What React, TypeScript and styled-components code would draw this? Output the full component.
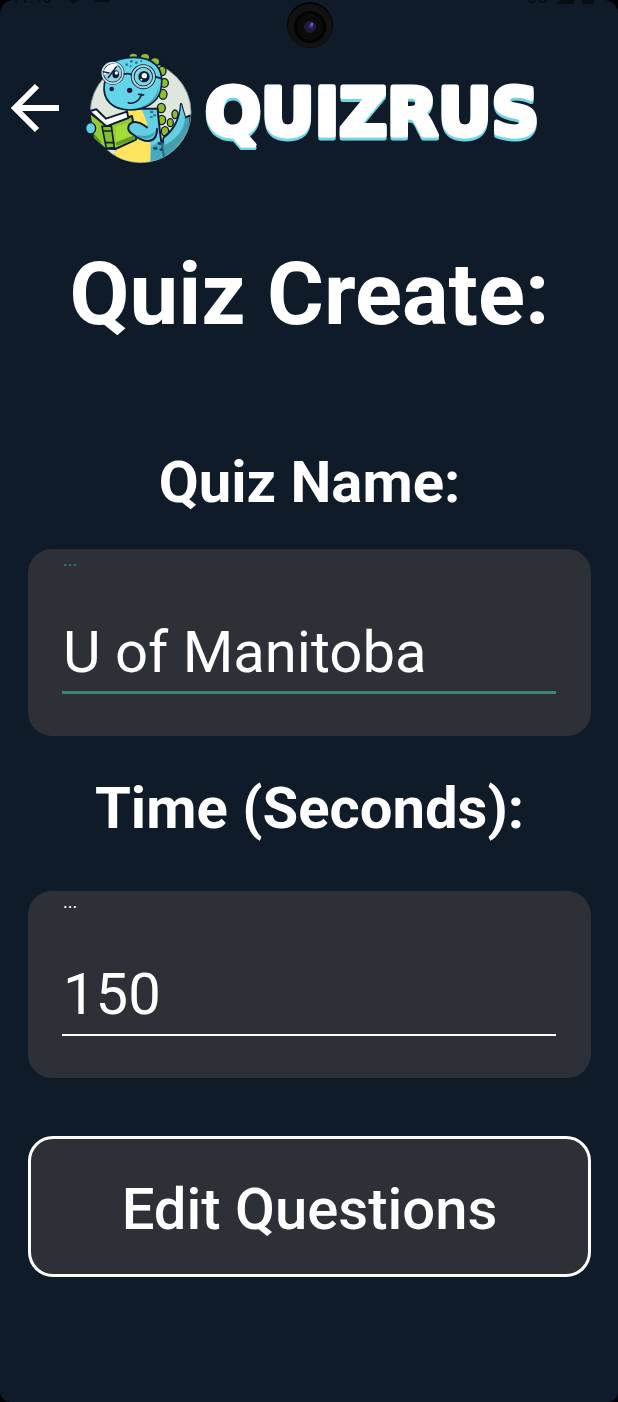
import React from "react";
import styled, { createGlobalStyle } from "styled-components";

const GlobalStyle = createGlobalStyle`
  * { box-sizing: border-box; }
  body { margin: 0; background: #000; font-family: Roboto, "Liberation Sans", sans-serif; color: #fff; }
`;

const Screen = styled.div`
  position: relative;
  min-height: 100vh;
  overflow: hidden;
  background: #0f1b28;
  border-radius: 14px 14px 10px 10px;
  display: flex;
  flex-direction: column;
`;

const StatusBar = styled.div`
  height: 4px;
  padding: 0 24px 0 11px;
  display: flex;
  justify-content: space-between;
  align-items: flex-end;
  overflow: hidden;
  color: #070c12;
  font-size: 16px;
  line-height: 12px;
  font-weight: 500;
`;

const StatusGroup = styled.div<{ $gap: number }>`
  display: flex;
  align-items: flex-end;
  gap: ${(p) => p.$gap}px;
  svg { display: block; }
`;

const Camera = styled.svg`
  position: absolute;
  top: 2px;
  left: 50%;
  margin-left: -22px;
`;

const Header = styled.header`
  display: flex;
  align-items: center;
  height: 126px;
  margin-top: 40px;
`;

const BackButton = styled.button`
  border: 0;
  padding: 1px 0 0 11px;
  width: 76px;
  background: none;
  color: inherit;
  display: flex;
`;

const BrandName = styled.svg`
  display: block;
  text {
    font-family: "DejaVu Sans", sans-serif;
    font-weight: 700;
    font-size: 66px;
    stroke-width: 5px;
    stroke-linejoin: round;
    stroke-linecap: round;
  }
`;

const Main = styled.main`
  display: flex;
  flex-direction: column;
  padding: 0 27px 0 28px;
`;

const Title = styled.h1`
  margin: 68px 0 0;
  text-align: center;
  font-size: 87px;
  line-height: 112px;
  font-weight: 700;
`;

const FieldLabel = styled.label<{ $top: number; $bottom: number }>`
  margin: ${(p) => p.$top}px 0 ${(p) => p.$bottom}px;
  text-align: center;
  font-size: 58px;
  line-height: 72px;
  font-weight: 700;
`;

const FieldCard = styled.div`
  height: 187px;
  padding: 3px 35px 42px 34px;
  border-radius: 24px;
  background: #2d3137;
  display: flex;
  flex-direction: column;
  justify-content: space-between;
`;

const Hint = styled.span<{ $color: string }>`
  padding-left: 1px;
  color: ${(p) => p.$color};
  font-size: 18px;
  line-height: 16px;
`;

const Field = styled.input<{ $line: string; $weight: number }>`
  width: 100%;
  height: 82px;
  padding: 0 0 0 1px;
  border: 0;
  border-bottom: ${(p) => p.$weight}px solid ${(p) => p.$line};
  outline: 0;
  background: none;
  color: #fff;
  font: 400 58px Roboto, "Liberation Sans", sans-serif;
`;

const EditButton = styled.button`
  height: 141px;
  margin-top: 58px;
  padding: 4px 0 0;
  border: 3px solid #fff;
  border-radius: 25px;
  background: #2d3137;
  color: #fff;
  font: 500 58px Roboto, "Liberation Sans", sans-serif;
`;

const Dino = () => (
  <svg width="124" height="126" viewBox="0 0 372 378" role="img" aria-label="Dinosaur reading a book">
    <defs>
      <clipPath id="disc"><circle cx="194" cy="205" r="150" /></clipPath>
    </defs>
    <circle cx="194" cy="205" r="151" fill="#dfe6dc" stroke="#8c979b" strokeWidth="3" />
    <g fill="#8dbd28" stroke="#101b38" strokeWidth="4">
      <ellipse cx="172" cy="37" rx="13" ry="10" />
      <ellipse cx="207" cy="39" rx="14" ry="11" />
      <ellipse cx="237" cy="53" rx="14" ry="12" />
      <ellipse cx="258" cy="81" rx="12" ry="14" />
      <ellipse cx="265" cy="117" rx="12" ry="13" />
      <ellipse cx="261" cy="151" rx="12" ry="15" />
      <ellipse cx="256" cy="192" rx="12" ry="14" />
      <ellipse cx="257" cy="228" rx="12" ry="14" />
      <ellipse cx="267" cy="262" rx="11" ry="14" />
      <ellipse cx="283" cy="236" rx="9" ry="12" />
      <ellipse cx="297" cy="211" rx="9" ry="13" />
    </g>
    <g clipPath="url(#disc)">
      <path d="M315 178 C312 224 294 257 263 280 L250 358 C300 350 344 290 344 214 L327 220Z" fill="#469fae" stroke="#101b38" strokeWidth="6" />
      <path d="M315 180 C314 226 296 262 264 284 L266 303 C299 286 327 260 327 219Z" fill="#62d0e2" />
      <path d="M155 194 H245 C250 252 255 315 270 358 H112 L125 306Z" fill="#62d0e2" stroke="#101b38" strokeWidth="6" />
      <path d="M155 197 H197 C217 234 228 296 223 358 H108 L122 306Z" fill="#ffe55d" />
      <path d="M225 306 C243 300 257 286 263 300 L272 354 H223Z" fill="#3696ae" opacity=".65" />
    </g>
    <path d="M100 60 C136 36 207 30 239 62 C258 81 261 105 254 139 C245 176 207 197 160 198 C110 197 78 168 85 120Z" fill="#62d5e9" stroke="#101b38" strokeWidth="5" />
    <path d="M248 119 C246 160 220 184 177 194 C224 188 251 163 248 119Z" fill="#399eb1" />
    <g fill="#28768e">
      <circle cx="152" cy="62" r="4" /><circle cx="166" cy="52" r="4" /><circle cx="181" cy="56" r="4" />
      <circle cx="164" cy="67" r="3" /><circle cx="196" cy="51" r="3" />
      <ellipse cx="227" cy="204" rx="6" ry="4" /><ellipse cx="236" cy="214" rx="5" ry="3" />
      <ellipse cx="226" cy="219" rx="5" ry="3" />
    </g>
    <g fill="#1a4661">
      <ellipse cx="251" cy="298" rx="7" ry="5" /><ellipse cx="238" cy="313" rx="7" ry="5" />
      <ellipse cx="256" cy="317" rx="6" ry="4" />
    </g>
    <circle cx="110" cy="87" r="31" fill="#8bd5e2" stroke="#101b38" strokeWidth="9" />
    <path d="M83 92 A31 31 0 0 1 127 62 L102 84Z" fill="#fff" />
    <circle cx="110" cy="87" r="31" fill="none" stroke="#c8e3e6" strokeWidth="5" />
    <path d="M80 83 L100 87 M96 102 L122 67" stroke="#101b38" strokeWidth="4" />
    <ellipse cx="119" cy="91" rx="10" ry="12" fill="#101b38" />
    <circle cx="121" cy="87" r="5" fill="#fff" />
    <circle cx="202" cy="98" r="32" fill="#78d9e6" stroke="#101b38" strokeWidth="11" />
    <circle cx="202" cy="98" r="32" fill="none" stroke="#a4d4d9" strokeWidth="6" />
    <circle cx="204" cy="98" r="17" fill="#101b38" />
    <circle cx="205" cy="95" r="8" fill="#fff" /><circle cx="196" cy="107" r="3" fill="#fff" />
    <path d="M143 91 Q155 86 167 92 M237 98 L258 104" fill="none" stroke="#101b38" strokeWidth="5" />
    <circle cx="107" cy="135" r="7" fill="#101b38" /><circle cx="161" cy="139" r="8" fill="#101b38" />
    <path d="M157 176 C172 182 192 170 196 151 M188 151 L203 153" fill="none" stroke="#101b38" strokeWidth="5" strokeLinecap="round" />
    <path d="M40 206 L53 285 L87 314 L118 315 L180 287 L168 216 L90 242Z" fill="#92cc32" stroke="#101b38" strokeWidth="6" strokeLinejoin="round" />
    <path d="M40 202 L61 196 L90 224 L153 203 L157 222 L91 247Z" fill="#fff" stroke="#101b38" strokeWidth="6" strokeLinejoin="round" />
    <path d="M119 248 L171 235 L178 285 L119 305Z" fill="#a2dc38" />
    <path d="M120 295 L175 273 L177 286 L121 306Z" fill="#629d27" />
    <path d="M78 247 L106 246 L115 311 L91 313Z" fill="#83bf2d" stroke="#101b38" strokeWidth="5" />
    <path d="M82 261 L107 261 M88 296 L115 296" stroke="#101b38" strokeWidth="5" />
    <path d="M52 267 L73 290 L76 299 L54 282Z" fill="#549426" />
    <ellipse cx="44" cy="253" rx="15" ry="17" fill="#60cfe2" stroke="#101b38" strokeWidth="4" />
    <path d="M244 218 C244 244 237 254 213 250 C201 243 194 231 174 234 C155 238 151 257 166 268 C178 274 190 291 216 291 C234 290 244 278 244 255Z" fill="#62d0e2" />
    <path d="M213 250 C201 243 194 231 174 234 C155 238 151 257 166 268 C178 274 190 291 216 291 C234 290 243 276 243 255" fill="none" stroke="#101b38" strokeWidth="6" strokeLinecap="round" />
    <path d="M179 273 C196 287 230 291 237 264 C217 279 197 276 179 273Z" fill="#3ca0b5" />
  </svg>
);

const Brand = () => (
  <BrandName width="345" height="86" viewBox="0 0 345 86" role="img" aria-label="QUIZRUS">
    <defs>
      <filter id="rim" x="-5%" y="-5%" width="110%" height="120%">
        <feDropShadow dx="0" dy="3" stdDeviation="0" floodColor="#6fd6e4" />
      </filter>
    </defs>
    <text x="5" y="71" fill="#fff" stroke="#fff" filter="url(#rim)">QUIZRUS</text>
  </BrandName>
);

export default function App() {
  return (
    <>
      <GlobalStyle />
      <Screen>
        <StatusBar>
          <StatusGroup $gap={15}>
            <span>11:15</span>
            <svg width="13" height="14" viewBox="0 0 13 14"><path d="M1 0H12V9L6.500 14L1 9Z" fill="currentColor" /></svg>
            <svg width="14" height="14" viewBox="0 0 14 14"><path d="M0 0H14V12H0Z" fill="currentColor" /></svg>
          </StatusGroup>
          <StatusGroup $gap={8}>
            <span>3G</span>
            <svg width="18" height="14" viewBox="0 0 18 14"><path d="M18 0V14H0Z" fill="currentColor" /></svg>
            <svg width="12" height="14" viewBox="0 0 12 14"><rect width="12" height="14" rx="1" fill="currentColor" /></svg>
          </StatusGroup>
        </StatusBar>
        <Camera width="46" height="46" viewBox="0 0 46 46" aria-hidden="true">
          <defs>
            <radialGradient id="lens" cx=".6" cy=".4">
              <stop offset="0" stopColor="#6546c0" /><stop offset=".45" stopColor="#2a1a52" /><stop offset="1" stopColor="#171d28" />
            </radialGradient>
          </defs>
          <circle cx="23" cy="23" r="23" fill="#050505" />
          <circle cx="23" cy="24" r="22" fill="#121212" />
          <circle cx="23" cy="25" r="16" fill="#030303" />
          <circle cx="23" cy="25" r="13" fill="#0b0b0c" />
          <circle cx="23" cy="25" r="6" fill="url(#lens)" />
          <circle cx="25" cy="22" r="1" fill="#a285dc" />
        </Camera>
        <Header>
          <BackButton aria-label="Back">
            <svg width="48" height="50" viewBox="0 0 48 50" aria-hidden="true">
              <path d="M26 3L4 25L26 47M4 25H48" fill="none" stroke="currentColor" strokeWidth="6" />
            </svg>
          </BackButton>
          <Dino />
          <Brand />
        </Header>
        <Main>
          <Title>Quiz Create:</Title>
          <FieldLabel htmlFor="quiz-name" $top={96} $bottom={31}>Quiz Name:</FieldLabel>
          <FieldCard>
            <Hint $color="#3c8576">...</Hint>
            <Field id="quiz-name" defaultValue="U of Manitoba" $line="#3c8576" $weight={3} />
          </FieldCard>
          <FieldLabel htmlFor="quiz-time" $top={36} $bottom={47}>Time (Seconds):</FieldLabel>
          <FieldCard>
            <Hint $color="#fff">...</Hint>
            <Field id="quiz-time" inputMode="numeric" defaultValue="150" $line="#fff" $weight={2} />
          </FieldCard>
          <EditButton>Edit Questions</EditButton>
        </Main>
      </Screen>
    </>
  );
}
